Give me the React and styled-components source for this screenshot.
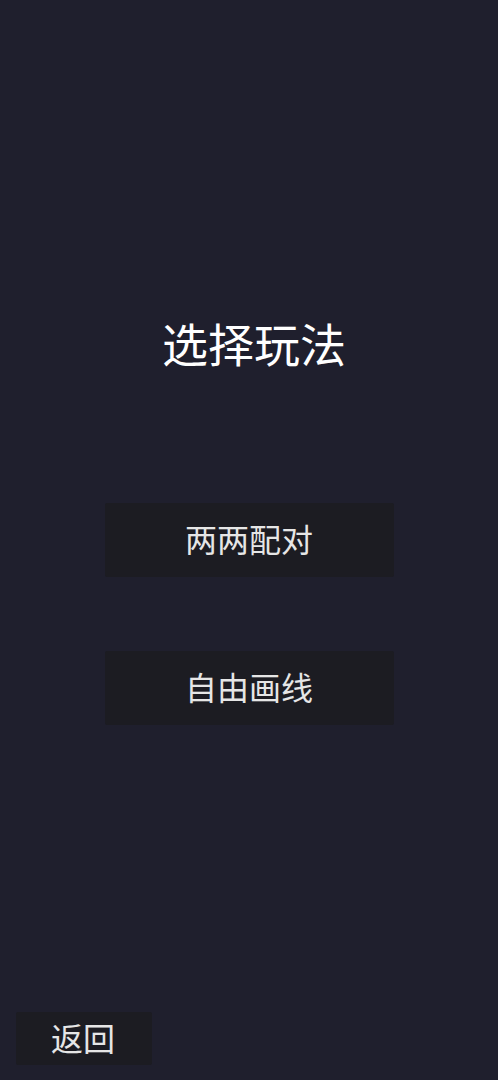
import React from 'react';
import styled, { createGlobalStyle } from 'styled-components';

const GlobalStyle = createGlobalStyle`
  html, body {
    margin: 0;
    padding: 0;
    background: #1f1f2d;
  }
  body {
    font-family: "Noto Sans CJK SC", "Noto Sans", sans-serif;
  }
`;

const Screen = styled.div`
  min-height: 100vh;
  box-sizing: border-box;
  display: flex;
  flex-direction: column;
  align-items: center;
  padding-top: 319px;
  background: #1f1f2d;
`;

const Title = styled.h1`
  margin: 0 0 3px;
  padding-left: 10px;
  font-size: 46px;
  line-height: 46px;
  font-weight: 400;
  color: #ffffff;
`;

const Menu = styled.div`
  margin-top: 135px;
  display: flex;
  flex-direction: column;
  gap: 74px;
`;

const ModeButton = styled.button`
  width: 289px;
  height: 74px;
  border: none;
  border-radius: 2px;
  background: #1c1c22;
  color: #e6e6e6;
  font-family: inherit;
  font-size: 32px;
  line-height: 1;
  padding: 0 0 4px;
  cursor: pointer;
`;

const Footer = styled.div`
  margin-top: auto;
  align-self: stretch;
  padding: 0 16px 15px;
`;

const BackButton = styled(ModeButton)`
  width: 136px;
  height: 53px;
  padding: 0 2px 4px 0;
`;

const modes = ['两两配对', '自由画线'];

export default function App() {
  return (
    <>
      <GlobalStyle />
      <Screen>
        <Title>选择玩法</Title>
        <Menu>
          {modes.map((m) => (
            <ModeButton key={m}>{m}</ModeButton>
          ))}
        </Menu>
        <Footer>
          <BackButton>返回</BackButton>
        </Footer>
      </Screen>
    </>
  );
}
